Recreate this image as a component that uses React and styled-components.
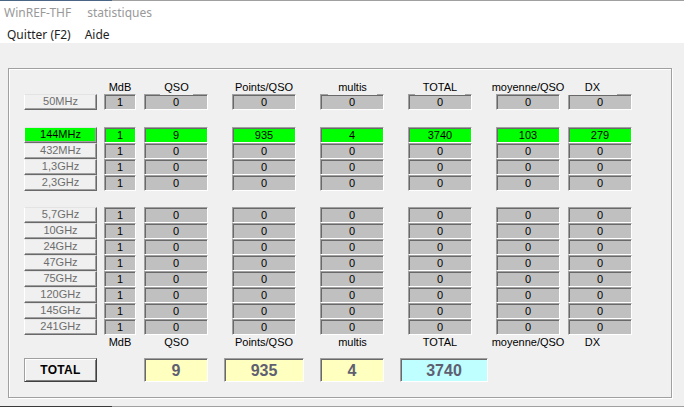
import React from 'react';
import styled, { createGlobalStyle } from 'styled-components';

const GlobalStyle = createGlobalStyle`
  html, body {
    margin: 0;
    padding: 0;
    background: #f0f0f0;
  }
  body {
    font-family: "Liberation Sans", Arial, sans-serif;
    font-size: 11px;
  }
`;

// column geometry taken from the original dialog
const columns = [
  { key: 'mdb', label: 'MdB', w: 32, ml: 7 },
  { key: 'qso', label: 'QSO', w: 64, ml: 8, cover: true, dx: 16, lw: 33 },
  { key: 'pts', label: 'Points/QSO', w: 64, ml: 24 },
  { key: 'multis', label: 'multis', w: 64, ml: 24, cover: true, dx: 8, lw: 49 },
  { key: 'total', label: 'TOTAL', w: 64, ml: 24, cover: true, dx: 7, lw: 50 },
  { key: 'moy', label: 'moyenne/QSO', w: 64, ml: 24 },
  { key: 'dx', label: 'DX', w: 64, ml: 8, cover: true, dx: 0, lw: 49 },
];

const zero = [1, 0, 0, 0, 0, 0, 0];

const topBands = [
  { name: '144MHz', active: true, vals: [1, 9, 935, 4, 3740, 103, 279] },
  { name: '432MHz', vals: zero },
  { name: '1,3GHz', vals: zero },
  { name: '2,3GHz', vals: zero },
];

const highBands = ['5,7GHz', '10GHz', '24GHz', '47GHz', '75GHz', '120GHz', '145GHz', '241GHz'];

const Window = styled.div`
  width: 684px;
  height: 407px;
  display: flex;
  flex-direction: column;
  overflow: hidden;
`;

const Edge = styled.div`
  display: flex;
  height: 1px;
  flex: none;
`;

const EdgeSeg = styled.div`
  height: 1px;
  width: ${p => (p.$w ? `${p.$w}px` : 'auto')};
  flex: ${p => (p.$w ? 'none' : '1')};
  background: ${p => p.$bg};
`;

const TitleBar = styled.div`
  height: 22px;
  flex: none;
  background: #fff;
  display: flex;
  align-items: center;
  gap: 16px;
  padding-left: 4px;
  font-family: "Noto Sans", "Open Sans", sans-serif;
  font-size: 12px;
  color: #999;
`;

const MenuBar = styled.div`
  height: 20px;
  flex: none;
  background: #fff;
  display: flex;
  align-items: center;
  padding-top: 2px;
  box-sizing: border-box;
  font-family: "Noto Sans", "Open Sans", sans-serif;
  font-size: 12px;
  color: #1e1e1e;
`;

const MenuItem = styled.span`
  padding: 0 7px;
`;

const Client = styled.div`
  flex: 1;
  padding: 25px 0 0 8px;
`;

const GroupBox = styled.div`
  width: 664px;
  height: 330px;
  box-sizing: border-box;
  border: 1px solid #a0a0a0;
  box-shadow: 1px 1px 0 #fff, inset 1px 1px 0 #fff;
  padding: 11px 0 0 15px;
  display: flex;
  flex-direction: column;
`;

const Row = styled.div`
  display: flex;
  height: ${p => p.$h || 16}px;
  margin-top: ${p => p.$mt || 0}px;
`;

const LabelRow = styled.div`
  display: flex;
  height: ${p => p.$h}px;
  margin-left: 73px;
`;

const LabelCell = styled.div`
  width: ${p => p.$w}px;
  margin-left: ${p => p.$ml}px;
  display: flex;
  justify-content: ${p => (p.$dx !== undefined ? 'flex-start' : 'center')};
`;

const Label = styled.div`
  position: relative;
  z-index: 1;
  margin-left: ${p => p.$dx || 0}px;
  width: ${p => (p.$lw ? `${p.$lw}px` : 'auto')};
  height: ${p => (p.$cover ? 15 : 14)}px;
  line-height: 14px;
  text-align: center;
  white-space: nowrap;
  color: #000;
  background: ${p => (p.$cover ? '#f0f0f0' : 'transparent')};
`;

const BandButton = styled.div`
  width: 73px;
  height: 16px;
  box-sizing: border-box;
  border: 1px solid;
  border-color: #e3e3e3 #696969 #696969 #fff;
  box-shadow: inset -1px -1px 0 #a0a0a0;
  background: ${p => (p.$active ? '#00ff00' : '#f0f0f0')};
  color: ${p => (p.$active ? '#000' : '#6d6d6d')};
  line-height: 13px;
  text-align: center;
`;

const Box = styled.div`
  width: ${p => p.$w}px;
  height: ${p => p.$h || 16}px;
  margin-left: ${p => p.$ml}px;
  box-sizing: border-box;
  border: 1px solid;
  border-color: #a0a0a0 #fff #fff #a0a0a0;
  box-shadow: inset 1px 1px 0 #696969;
  background: ${p => p.$bg || '#c0c0c0'};
  color: #000;
  text-align: center;
  line-height: ${p => (p.$h || 16) - 2}px;
`;

const BigBox = styled(Box)`
  font-size: 16px;
  font-weight: bold;
  color: #5f5f72;
  line-height: 23px;
`;

const TotalButton = styled.div`
  width: 73px;
  height: 24px;
  box-sizing: border-box;
  border: 1px solid;
  border-color: #a0a0a0 #404040 #404040 #a0a0a0;
  box-shadow: inset 1px 1px 0 #fff, inset -1px -1px 0 #808080;
  background: #f0f0f0;
  font-size: 12px;
  font-weight: bold;
  letter-spacing: 0.3px;
  line-height: 22px;
  text-align: center;
  color: #000;
`;

const Filler = styled.div`
  flex: 1;
`;

function Labels({ h }) {
  return (
    <LabelRow $h={h}>
      {columns.map(c => (
        <LabelCell key={c.key} $w={c.w} $ml={c.ml} $dx={c.dx}>
          <Label $dx={c.dx} $lw={c.lw} $cover={h === 14 && c.cover}>
            {c.label}
          </Label>
        </LabelCell>
      ))}
    </LabelRow>
  );
}

function BandRow({ name, active, vals, mt }) {
  return (
    <Row $mt={mt}>
      <BandButton $active={active}>{name}</BandButton>
      {columns.map((c, i) => (
        <Box key={c.key} $w={c.w} $ml={c.ml} $bg={active ? '#00ff00' : undefined}>
          {vals[i]}
        </Box>
      ))}
    </Row>
  );
}

export default function App() {
  return (
    <>
      <GlobalStyle />
      <Window>
        <Edge>
          <EdgeSeg $w={112} $bg="#4b6684" />
          <EdgeSeg $bg="#a0a0a0" />
        </Edge>
        <TitleBar>
          <span>WinREF-THF</span>
          <span>statistiques</span>
        </TitleBar>
        <MenuBar>
          <MenuItem>Quitter (F2)</MenuItem>
          <MenuItem>Aide</MenuItem>
        </MenuBar>
        <Client>
          <GroupBox>
            <Labels h={14} />
            <BandRow name="50MHz" vals={zero} />
            {topBands.map((b, i) => (
              <BandRow key={b.name} {...b} mt={i === 0 ? 17 : 0} />
            ))}
            {highBands.map((name, i) => (
              <BandRow key={name} name={name} vals={zero} mt={i === 0 ? 16 : 0} />
            ))}
            <Labels h={13} />
            <Row $h={24} $mt={10}>
              <TotalButton>TOTAL</TotalButton>
              <BigBox $w={64} $h={24} $ml={47} $bg="#ffffc0">9</BigBox>
              <BigBox $w={80} $h={24} $ml={16} $bg="#ffffc0">935</BigBox>
              <BigBox $w={64} $h={24} $ml={16} $bg="#ffffc0">4</BigBox>
              <BigBox $w={88} $h={24} $ml={16} $bg="#c0ffff">3740</BigBox>
            </Row>
          </GroupBox>
          <Filler />
        </Client>
        <Edge>
          <EdgeSeg $w={112} $bg="#3c3a38" />
          <EdgeSeg $bg="#a0a0a0" />
        </Edge>
      </Window>
    </>
  );
}
